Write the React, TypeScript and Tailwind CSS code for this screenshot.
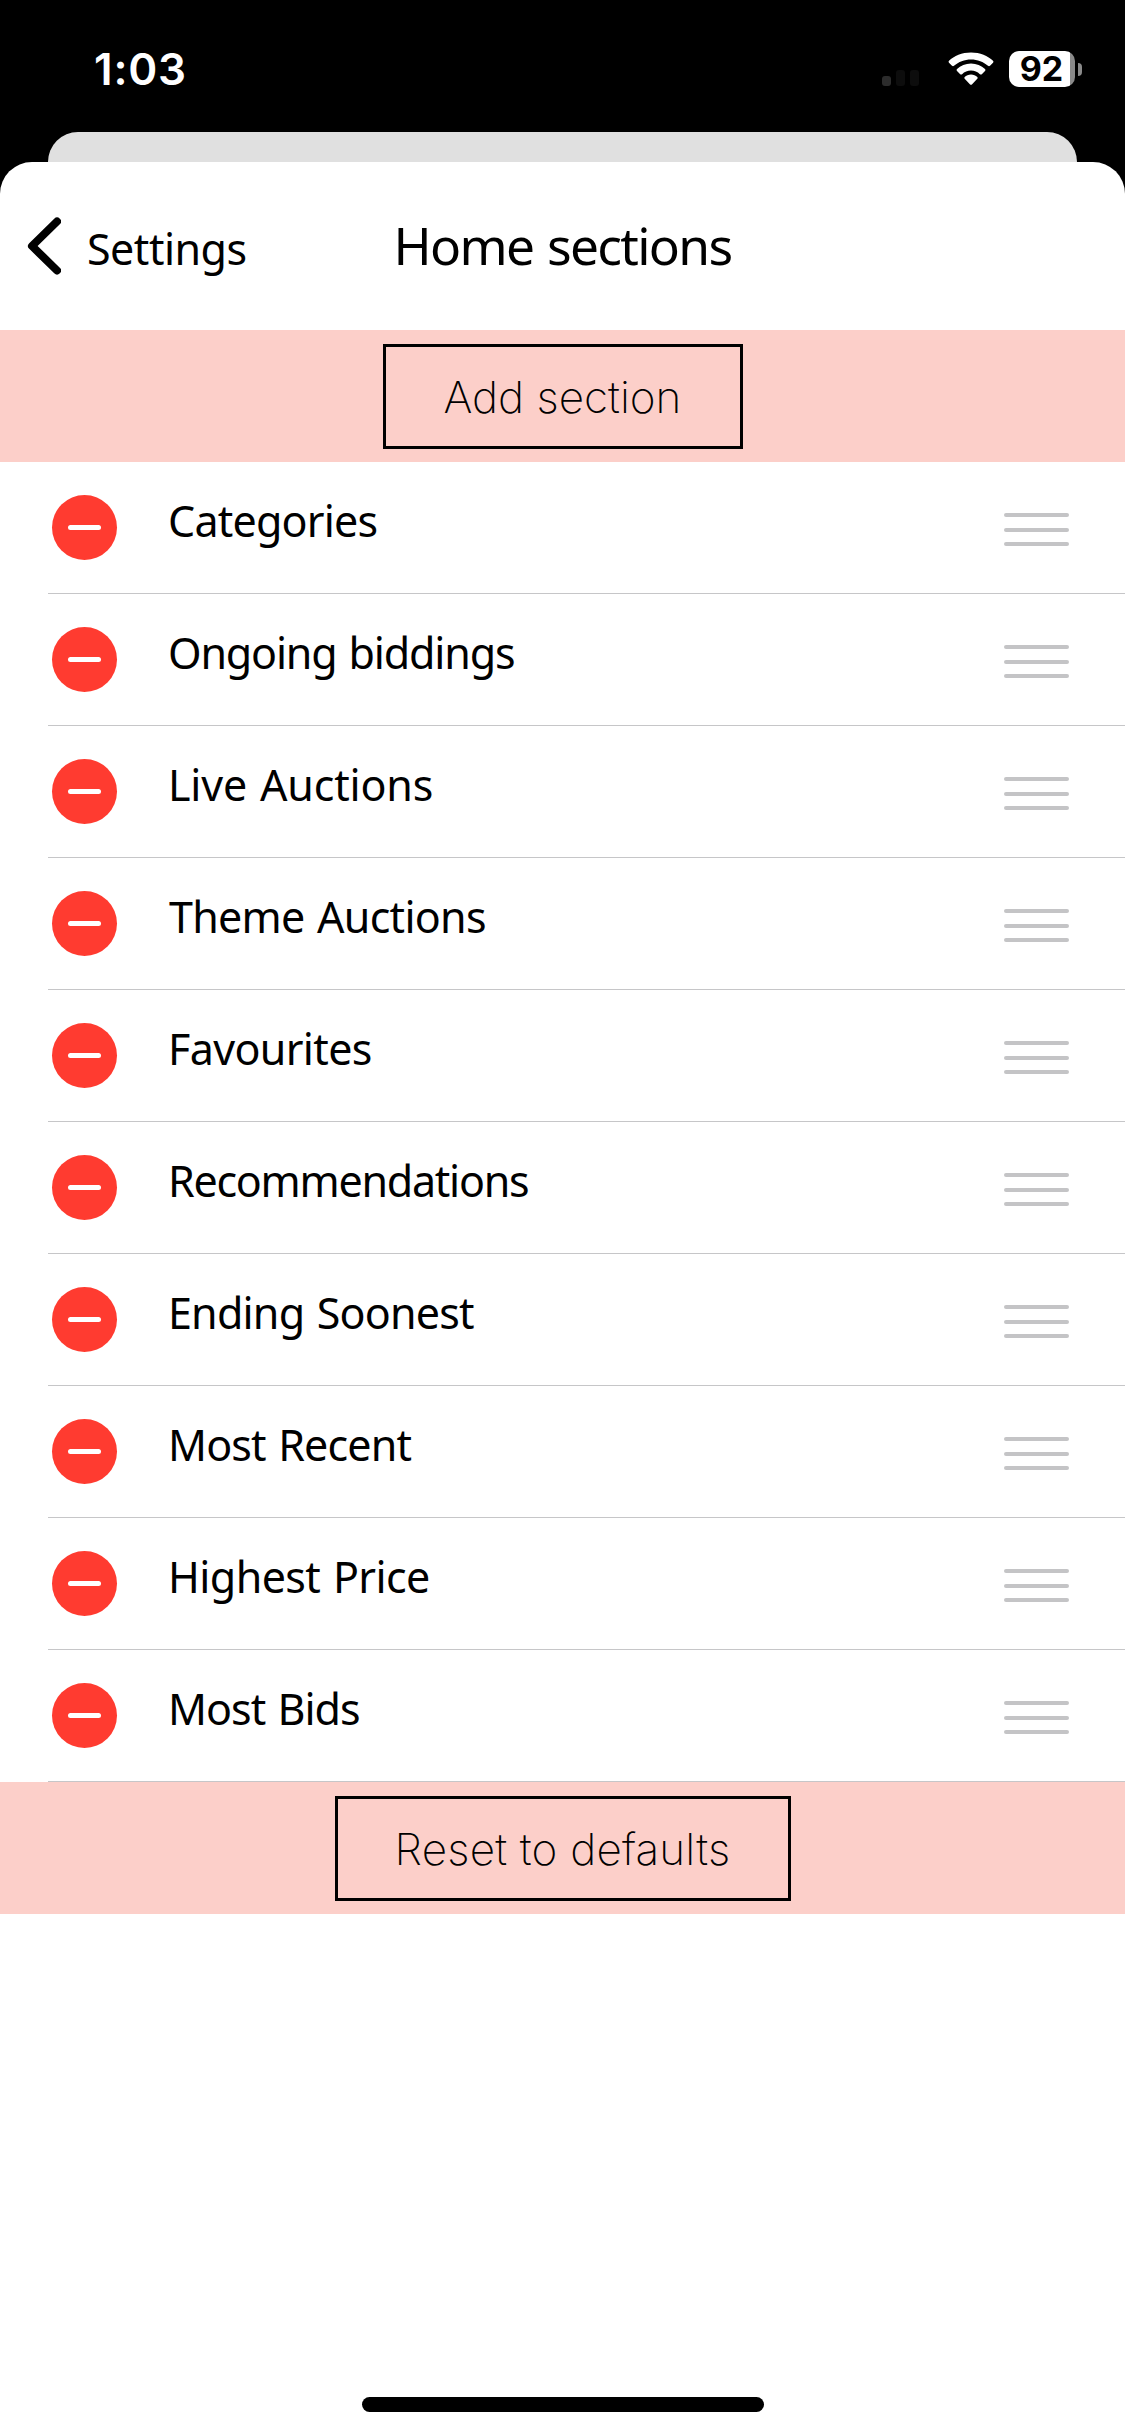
const sections = [
  { name: "Categories", spacing: "tracking-[-0.79px]" },
  { name: "Ongoing biddings", spacing: "tracking-[-1.17px]" },
  { name: "Live Auctions", spacing: "tracking-[-0.18px]" },
  { name: "Theme Auctions", spacing: "tracking-[-0.72px] pl-px" },
  { name: "Favourites", spacing: "tracking-[-0.63px]" },
  { name: "Recommendations", spacing: "tracking-[-1.26px]" },
  { name: "Ending Soonest", spacing: "tracking-[-0.79px]" },
  { name: "Most Recent", spacing: "tracking-[-0.83px]" },
  { name: "Highest Price", spacing: "tracking-[-0.58px]" },
  { name: "Most Bids", spacing: "tracking-[-0.98px]" },
];

function StatusBar() {
  return (
    <div className="flex h-[132px] items-center justify-between pt-1.5 pl-[94px] pr-[43px] font-['Inter',sans-serif] text-white">
      <span className="text-[44px] leading-none font-semibold tracking-[0.8px]">1:03</span>
      <div className="flex items-center">
        <div className="flex h-4 items-end gap-[5px] mt-[18px] mr-[29px]">
          <span className="h-2.5 w-[9px] rounded-[3px] bg-[#2c2c2c]"></span>
          <span className="h-4 w-[9px] rounded-[3px] bg-[#0d0d0d]"></span>
          <span className="h-4 w-[9px] rounded-[3px] bg-[#0d0d0d]"></span>
        </div>
        <svg width="46" height="34" viewBox="0 0 46 34" fill="currentColor" className="mr-[15px]">
          <path d="M23 .5C32 .5 40 4 45 8.8Q46 9.8 45 10.8L42 13.8Q41 14.6 40 13.8C35.5 9.8 29.5 7.5 23 7.5S10.5 9.8 6 13.8Q5 14.6 4 13.8L1 10.8Q0 9.800 1 8.800C6 4 14 .5 23 .5Z" />
          <path d="M23 11.6C28.5 11.6 33.3 13.7 37 17Q38 18 37 19L33.8 22.2Q32.9 23 31.9 22.2C29.5 20 26.5 18.6 23 18.6S16.5 20 14.1 22.2Q13.1 23 12.2 22.2L9 19Q8 18 9 17C12.7 13.7 17.5 11.6 23 11.6Z" />
          <path d="M23 22.5C25.5 22.5 27.7 23.5 29.3 25Q30.2 25.9 29.3 26.8L23.9 32.4Q23 33.3 22.1 32.4L16.7 26.8Q15.8 25.9 16.7 25C18.3 23.5 20.5 22.5 23 22.5Z" />
        </svg>
        <div className="flex h-9 w-[66px] items-center justify-center rounded-[10px] bg-linear-to-r from-white from-[61px] to-[#8a8a8a] to-[61px] pr-px text-[34px] leading-none font-bold text-black">
          92
        </div>
        <span className="ml-[3px] h-[13px] w-1 rounded-r-full bg-[#8a8a8a]"></span>
      </div>
    </div>
  );
}

function Header() {
  return (
    <div className="grid h-[168px] grid-cols-[1fr_auto_1fr] items-center">
      <div className="flex items-center pl-[27px]">
        <svg width="34" height="58" viewBox="0 0 34 58" fill="none" stroke="black" strokeWidth="8" strokeLinecap="round" strokeLinejoin="round">
          <path d="M30 4.5 5 29 30 53.5" />
        </svg>
        <span className="ml-[26px] pt-1 text-[43px] leading-none tracking-[-0.5px]">Settings</span>
      </div>
      <h1 className="text-[51.5px] leading-none tracking-[-1.7px] [word-spacing:2px]">Home sections</h1>
    </div>
  );
}

function SectionRow({ name, spacing }: { name: string; spacing: string }) {
  return (
    <li className="ml-12 flex h-[132px] items-center border-b border-[#c6c6c8] pl-1 pr-14">
      <span className="flex size-[65px] items-center justify-center rounded-full bg-[#ff3b30]">
        <span className="h-[5px] w-[33px] rounded-full bg-white"></span>
      </span>
      <span className={`ml-[51px] flex-1 pb-3.5 text-[43px] leading-none [word-spacing:2px] ${spacing}`}>{name}</span>
      <span className="mt-1 flex w-[65px] flex-col gap-[10.5px]">
        <span className="h-1 rounded-full bg-[#c4c4c6]"></span>
        <span className="h-1 rounded-full bg-[#c4c4c6]"></span>
        <span className="h-1 rounded-full bg-[#c4c4c6]"></span>
      </span>
    </li>
  );
}

export default function App() {
  return (
    <main className="flex h-[2436px] w-[1125px] flex-col bg-black font-['Noto_Sans',sans-serif] text-black">
      <StatusBar />
      <div className="mx-12 h-[30px] rounded-t-[30px] bg-[#e0e0e0]"></div>
      <div className="flex flex-1 flex-col rounded-t-[32px] bg-white">
        <Header />
        <div className="flex h-[132px] justify-center bg-[#fccfc9] pt-3.5 font-['Inter',sans-serif]">
          <button className="h-[105px] w-[360px] border-3 border-black text-[44px] leading-none font-extralight">
            Add section
          </button>
        </div>
        <ul>
          {sections.map((section) => (
            <SectionRow key={section.name} {...section} />
          ))}
        </ul>
        <div className="flex h-[132px] justify-center bg-[#fccfc9] pt-3.5 font-['Inter',sans-serif]">
          <button className="h-[105px] w-[456px] border-3 border-black text-[44px] leading-none font-extralight tracking-[0.2px]">
            Reset to defaults
          </button>
        </div>
        <div className="mx-auto mt-auto mb-6 h-[15px] w-[402px] rounded-full bg-black"></div>
      </div>
    </main>
  );
}
